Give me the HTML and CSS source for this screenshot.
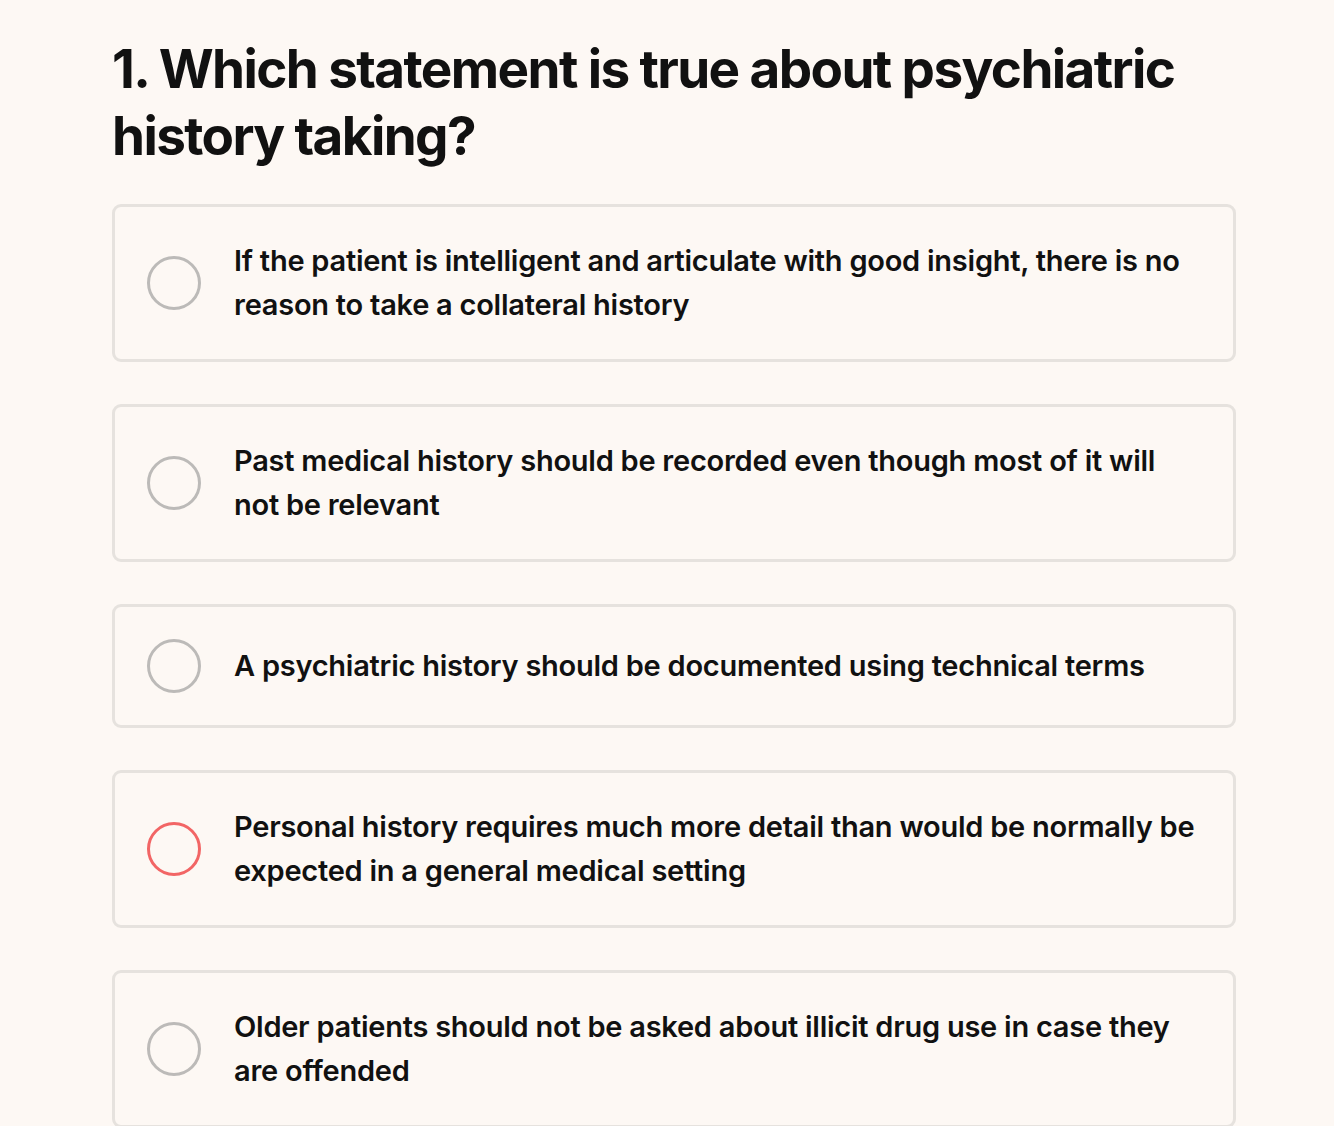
FILE: index.html
```html
<!DOCTYPE html>
<html lang="en">
<head>
<meta charset="utf-8">
<title>Quiz</title>
<link rel="stylesheet" href="styles.css">
</head>
<body>
<main class="quiz">
  <h1 class="question">1. Which statement is true about psychiatric history taking?</h1>
  <ul class="options">
    <li class="option">
      <span class="radio"></span>
      <span class="label">If the patient is intelligent and articulate with good insight, there is no reason to take a collateral history</span>
    </li>
    <li class="option">
      <span class="radio"></span>
      <span class="label">Past medical history should be recorded even though most of it will not be relevant</span>
    </li>
    <li class="option">
      <span class="radio"></span>
      <span class="label">A psychiatric history should be documented using technical terms</span>
    </li>
    <li class="option">
      <span class="radio radio-wrong"></span>
      <span class="label">Personal history requires much more detail than would be normally be expected in a general medical setting</span>
    </li>
    <li class="option">
      <span class="radio"></span>
      <span class="label">Older patients should not be asked about illicit drug use in case they are offended</span>
    </li>
  </ul>
</main>
</body>
</html>
```

FILE: styles.css
```css
html, body {
  margin: 0;
  padding: 0;
  background: #fdf8f4;
}
body {
  font-family: "Inter", "Lato", sans-serif;
  color: #111;
  overflow: hidden;
  height: 1126px;
}
.quiz {
  width: 1124px;
  margin-left: 112px;
  padding-top: 36px;
}
.question {
  margin: 0 0 34px 0;
  font-size: 53px;
  line-height: 67px;
  font-weight: 700;
  letter-spacing: -1.6px;
  width: 1100px;
}
.options {
  list-style: none;
  margin: 0;
  padding: 0;
  display: flex;
  flex-direction: column;
  gap: 42px;
}
.option {
  display: flex;
  align-items: center;
  gap: 33px;
  padding: 32px;
  border: 3px solid #e6e2de;
  border-radius: 9px;
}
.radio {
  flex: none;
  width: 54px;
  height: 54px;
  box-sizing: border-box;
  border: 3px solid #bcbab8;
  border-radius: 50%;
}
.radio-wrong {
  border-color: #f26565;
}
.label {
  font-size: 29px;
  line-height: 44px;
  font-weight: 600;
  letter-spacing: -0.25px;
}
```
